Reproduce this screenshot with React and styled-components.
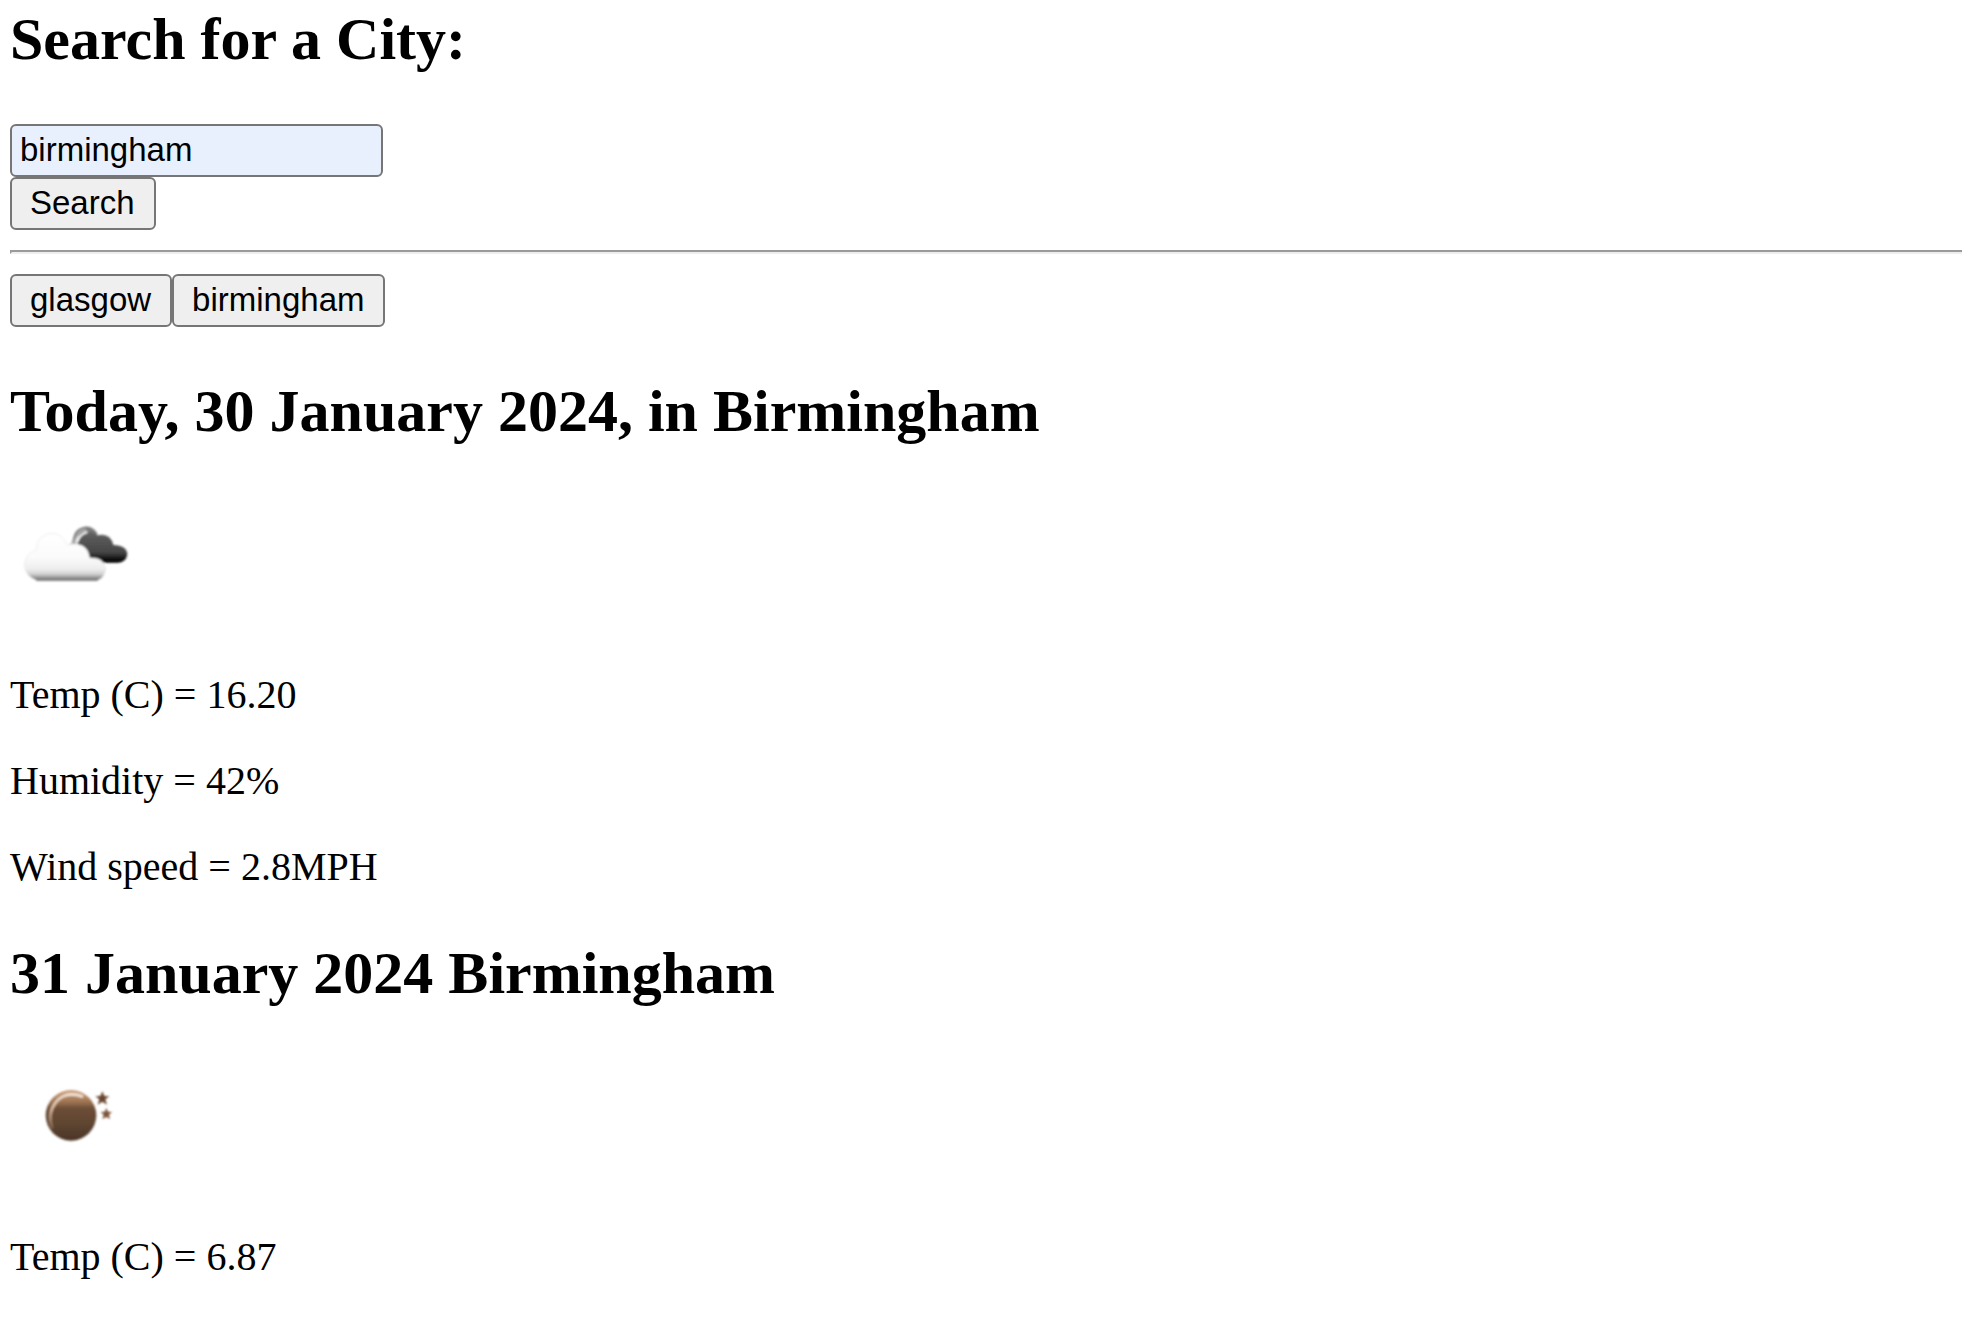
import React, { useState } from "react";
import styled, { createGlobalStyle, css } from "styled-components";

const GlobalStyle = createGlobalStyle`
  body {
    margin: 0;
    background: #ffffff;
    color: #000000;
    font-family: "Liberation Serif", "Times New Roman", serif;
    font-size: 40px;
    line-height: 44px;
  }
`;

const Page = styled.main`
  display: flow-root;
  padding: 5px 0 0 10px;
`;

const Heading = styled.h2`
  margin: ${({ $first }) => ($first ? "0 0 51px" : "50px 0")};
  font-size: 60px;
  font-weight: 700;
  line-height: 68px;
`;

const SearchForm = styled.form`
  display: flex;
  flex-direction: column;
  align-items: flex-start;
`;

const control = css`
  box-sizing: border-box;
  height: 53px;
  margin: 0;
  border: 2px solid #767676;
  border-radius: 6px;
  color: #000000;
  font-family: "Liberation Sans", Arial, sans-serif;
  font-size: 33px;
  line-height: 38px;
`;

const CityInput = styled.input`
  ${control}
  width: 373px;
  max-width: 100%;
  padding: 0 8px 2px;
  background: #e8f0fe;
`;

const Button = styled.button`
  ${control}
  padding: 0 19px 2px 18px;
  background: #efefef;
  cursor: pointer;
`;

const Divider = styled.hr`
  margin: 20px 0;
  border-style: solid;
  border-width: 2px 0 2px 2px;
  border-color: #9a9a9a #eeeeee #eeeeee #9a9a9a;
`;

const History = styled.div`
  display: flex;
  flex-wrap: wrap;
`;

const IconRow = styled.div`
  height: 136px;
`;

const Icon = styled.svg`
  display: block;
  width: 125px;
  height: 125px;
`;

const Reading = styled.p`
  margin: 42px 0;
`;

function CloudIcon() {
  return (
    <Icon viewBox="30 -15 375 375" role="img" aria-label="Broken clouds">
      <defs>
        <linearGradient id="cloud-front" gradientUnits="userSpaceOnUse" x1="0" y1="100" x2="0" y2="242">
          <stop offset="0" stopColor="#ffffff" />
          <stop offset="0.5" stopColor="#fbfbfb" />
          <stop offset="0.75" stopColor="#eeeeee" />
          <stop offset="0.86" stopColor="#d2d2d2" />
          <stop offset="0.94" stopColor="#929292" />
          <stop offset="1" stopColor="#707070" />
        </linearGradient>
        <linearGradient id="cloud-back" gradientUnits="userSpaceOnUse" x1="0" y1="85" x2="0" y2="187">
          <stop offset="0" stopColor="#707070" />
          <stop offset="0.3" stopColor="#585858" />
          <stop offset="0.7" stopColor="#474747" />
          <stop offset="0.9" stopColor="#151515" />
          <stop offset="1" stopColor="#000000" />
        </linearGradient>
        <filter id="cloud-soft">
          <feGaussianBlur stdDeviation="3" />
        </filter>
      </defs>
      <g filter="url(#cloud-soft)">
        <path
          d="M203 136 Q218 132 220 111 A39 39 0 0 1 293 101 L285 110 Q258 80 239 106 Q226 116 227 133 Z"
          fill="#7c7c7c"
        />
        <path d="M213 133 Q225 128 229 111 Q237 90 258 89" fill="none" stroke="#c4c4c4" strokeWidth="4" />
        <path
          d="M232 122 Q239 94 262 94 Q280 93 292 106 Q331 97 340 135 Q380 137 382 162 Q379 187 354 188 H302 L264 172 Q260 143 232 133 Z"
          fill="url(#cloud-back)"
        />
        <path d="M232 126 Q238 102 262 96" fill="none" stroke="#f2f2f2" strokeWidth="6" />
        <path
          d="M112 242 Q75 229 73 195 Q77 159 108 151 Q111 103 155 100 Q187 100 201 134 Q262 122 269 174 Q312 171 317 208 Q313 235 291 242 Z"
          fill="url(#cloud-front)"
          stroke="#e6e6e6"
          strokeWidth="2"
        />
        <path d="M109 240 H293" stroke="#777777" strokeWidth="5" />
      </g>
    </Icon>
  );
}

function MoonIcon() {
  return (
    <Icon viewBox="30 -12 375 375" role="img" aria-label="Clear night">
      <defs>
        <linearGradient id="moon-body" x1="0" y1="0" x2="0" y2="1">
          <stop offset="0" stopColor="#d0a27b" />
          <stop offset="0.1" stopColor="#bd8f6b" />
          <stop offset="0.25" stopColor="#98704f" />
          <stop offset="0.36" stopColor="#6d4e37" />
          <stop offset="0.65" stopColor="#5f4632" />
          <stop offset="1" stopColor="#4a3526" />
        </linearGradient>
        <linearGradient id="moon-shine" gradientUnits="userSpaceOnUse" x1="190" y1="95" x2="160" y2="205">
          <stop offset="0" stopColor="#f4e5d9" />
          <stop offset="0.5" stopColor="#d6b79d" />
          <stop offset="1" stopColor="#7b5b44" />
        </linearGradient>
        <filter id="moon-soft">
          <feGaussianBlur stdDeviation="3" />
        </filter>
      </defs>
      <g filter="url(#moon-soft)">
        <circle cx="213" cy="163" r="76" fill="url(#moon-body)" />
        <path
          d="M157 203 Q141 157 167 124 Q197 87 249 107"
          fill="none"
          stroke="url(#moon-shine)"
          strokeWidth="8"
        />
        <path
          d="M307 91 L313 105 L328 106 L316 115 L321 131 L307 122 L293 131 L298 115 L286 106 L301 105 Z"
          fill="#69452f"
        />
        <path
          d="M319 141 L324 152 L336 153 L327 161 L330 174 L319 168 L307 174 L311 161 L302 153 L314 152 Z"
          fill="#7d543b"
        />
      </g>
    </Icon>
  );
}

function Forecast({ title, icon, readings }) {
  return (
    <section>
      <Heading>{title}</Heading>
      <IconRow>{icon}</IconRow>
      {readings.map((reading) => (
        <Reading key={reading}>{reading}</Reading>
      ))}
    </section>
  );
}

const cities = ["glasgow", "birmingham"];

export default function App() {
  const [city, setCity] = useState("birmingham");

  return (
    <>
      <GlobalStyle />
      <Page>
        <Heading $first>
          <label htmlFor="city">Search for a City:</label>
        </Heading>
        <SearchForm onSubmit={(event) => event.preventDefault()}>
          <CityInput id="city" type="text" value={city} onChange={(event) => setCity(event.target.value)} />
          <Button type="submit">Search</Button>
        </SearchForm>
        <Divider />
        <History>
          {cities.map((name) => (
            <Button key={name} type="button" onClick={() => setCity(name)}>
              {name}
            </Button>
          ))}
        </History>
        <Forecast
          title="Today, 30 January 2024, in Birmingham"
          icon={<CloudIcon />}
          readings={["Temp (C) = 16.20", "Humidity = 42%", "Wind speed = 2.8MPH"]}
        />
        <Forecast title="31 January 2024 Birmingham" icon={<MoonIcon />} readings={["Temp (C) = 6.87"]} />
      </Page>
    </>
  );
}
